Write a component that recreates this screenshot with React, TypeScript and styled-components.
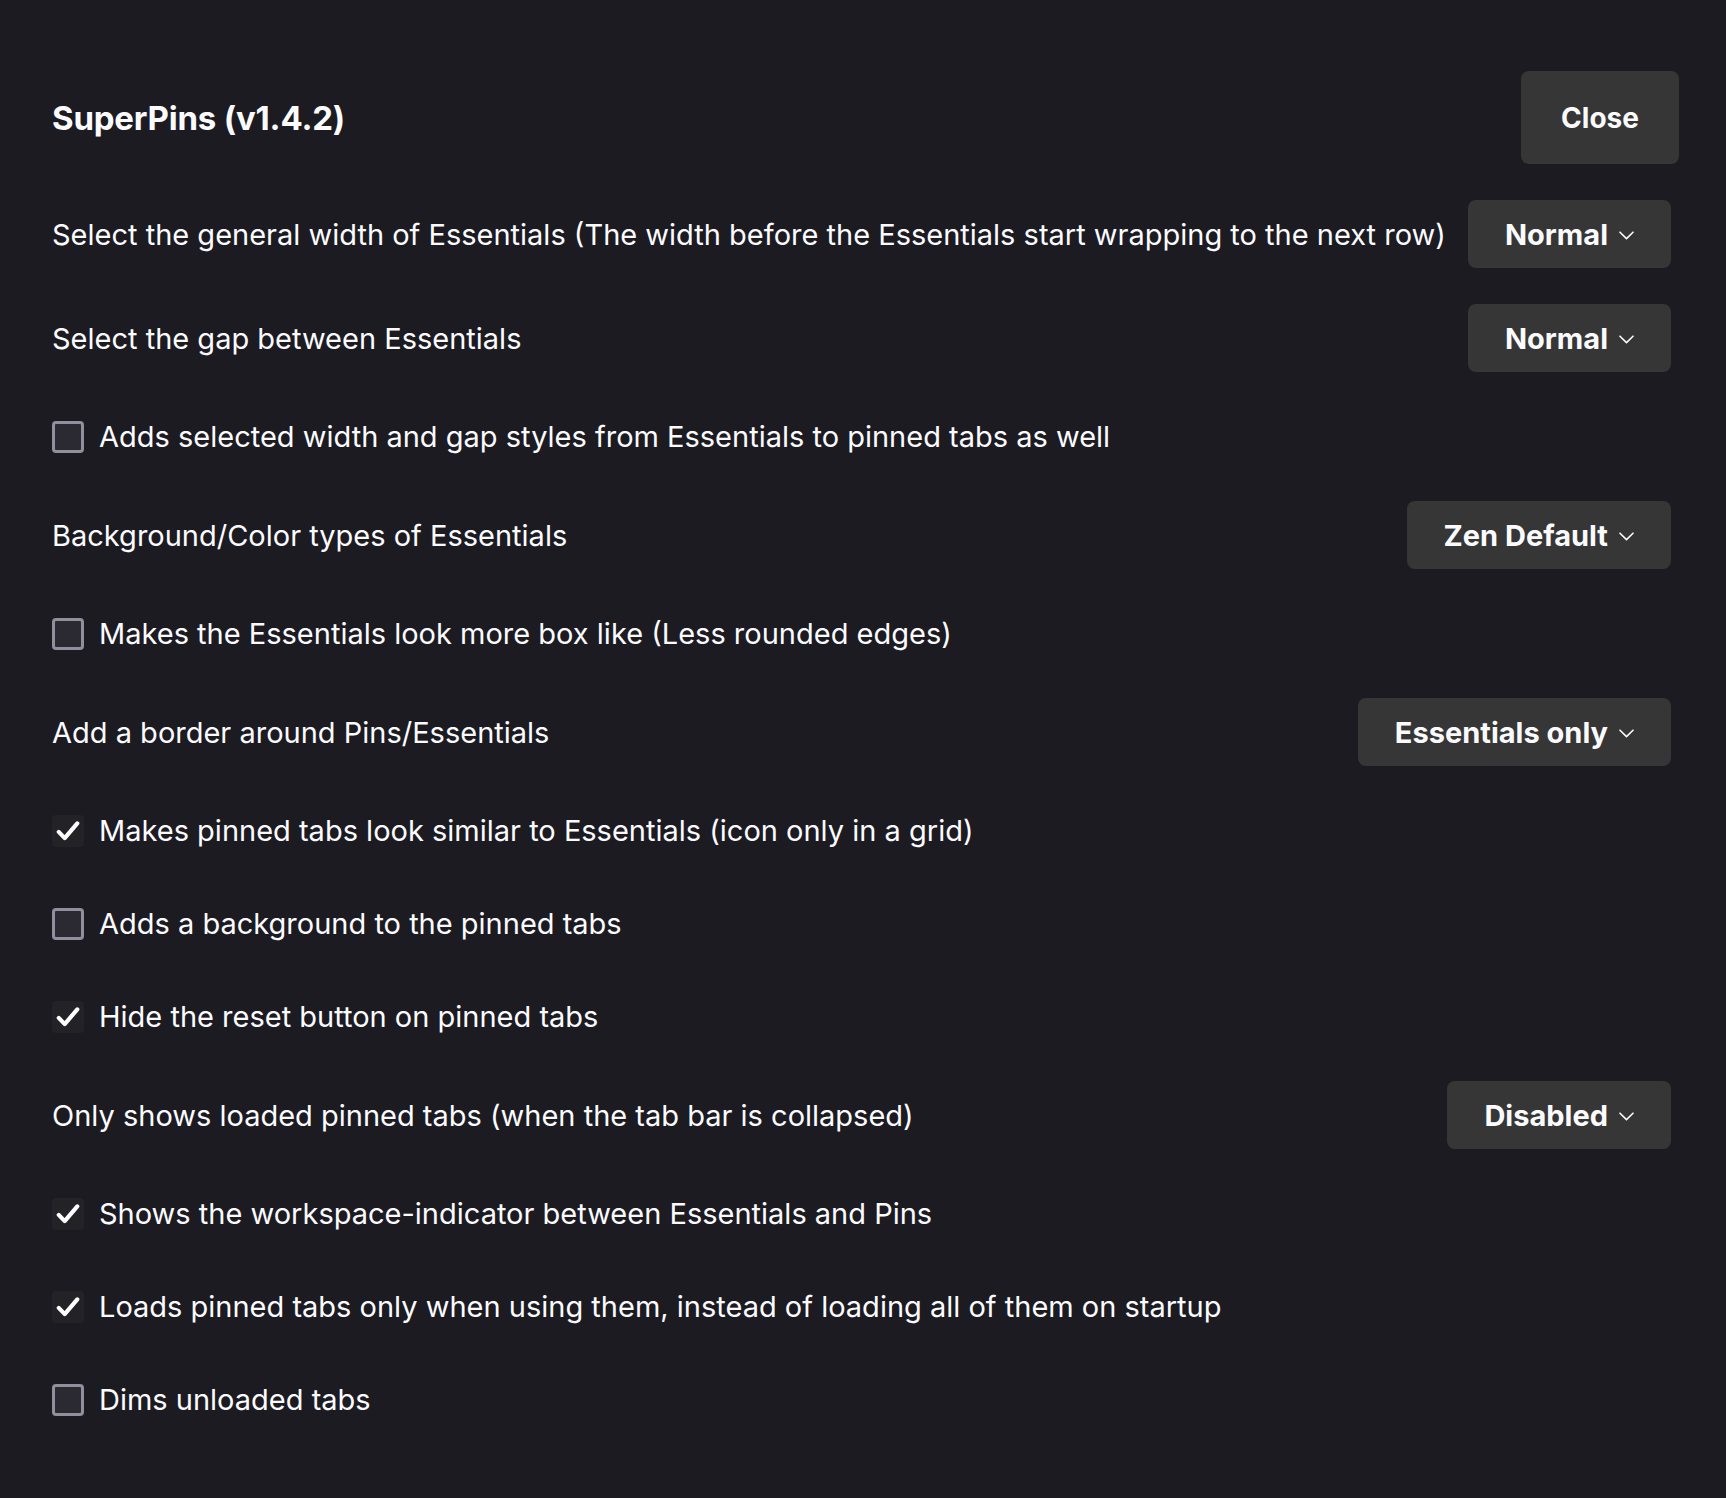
import React from 'react'
import styled, { createGlobalStyle } from 'styled-components'

const GlobalStyle = createGlobalStyle`
    html, body {
        margin: 0;
        padding: 0;
        background: #1c1b22;
    }

    body {
        font-family: Inter, "Noto Sans", "Liberation Sans", sans-serif;
        color: #fbfbfe;
        -webkit-font-smoothing: antialiased;
    }
`

const Page = styled.div`
    min-height: 1498px;
    box-sizing: border-box;
    padding: 71px 47px 60px 52px;
    background: #1c1b22;
`

const Header = styled.header`
    display: flex;
    align-items: center;
    justify-content: space-between;
    margin-bottom: 36px;
`

const Title = styled.h1`
    margin: 0;
    font-size: 33px;
    font-weight: 700;
    letter-spacing: -0.2px;
`

const CloseButton = styled.button`
    width: 158px;
    height: 93px;
    border: none;
    border-radius: 8px;
    background: #363636;
    color: #fbfbfe;
    font-family: inherit;
    font-size: 28px;
    font-weight: 700;
    cursor: pointer;
`

const List = styled.div`
    display: flex;
    flex-direction: column;
    gap: 36px;
`

const SelectRow = styled.div`
    display: flex;
    align-items: center;
    justify-content: space-between;
    height: 68px;
`

const Label = styled.span`
    font-size: 29px;
    font-weight: 400;
    white-space: nowrap;
`

const Dropdown = styled.button`
    display: flex;
    align-items: center;
    gap: 11px;
    height: 68px;
    margin-right: 8px;
    padding: 0 37px 0 37px;
    border: none;
    border-radius: 8px;
    background: #363636;
    color: #fbfbfe;
    font-family: inherit;
    font-size: 29px;
    font-weight: 700;
    cursor: pointer;

    svg {
        width: 15px;
        height: 9px;
        margin-top: 2px;
    }
`

const CheckRow = styled.label`
    display: flex;
    align-items: center;
    gap: 15px;
    height: 57px;
    cursor: pointer;
`

const Box = styled.span<{ checked: boolean }>`
    display: flex;
    align-items: center;
    justify-content: center;
    flex: none;
    width: 32px;
    height: 32px;
    box-sizing: border-box;
    border-radius: 4px;
    background: ${(p) => (p.checked ? '#232327' : '#2b2a33')};
    border: ${(p) => (p.checked ? 'none' : '3px solid #8f8f9d')};

    svg {
        width: 24px;
        height: 22px;
    }
`

type Setting =
    | { kind: 'select'; label: string; value: string }
    | { kind: 'check'; label: string; checked: boolean }

const SETTINGS: Setting[] = [
    { kind: 'select', label: 'Select the general width of Essentials (The width before the Essentials start wrapping to the next row)', value: 'Normal' },
    { kind: 'select', label: 'Select the gap between Essentials', value: 'Normal' },
    { kind: 'check', label: 'Adds selected width and gap styles from Essentials to pinned tabs as well', checked: false },
    { kind: 'select', label: 'Background/Color types of Essentials', value: 'Zen Default' },
    { kind: 'check', label: 'Makes the Essentials look more box like (Less rounded edges)', checked: false },
    { kind: 'select', label: 'Add a border around Pins/Essentials', value: 'Essentials only' },
    { kind: 'check', label: 'Makes pinned tabs look similar to Essentials (icon only in a grid)', checked: true },
    { kind: 'check', label: 'Adds a background to the pinned tabs', checked: false },
    { kind: 'check', label: 'Hide the reset button on pinned tabs', checked: true },
    { kind: 'select', label: 'Only shows loaded pinned tabs (when the tab bar is collapsed)', value: 'Disabled' },
    { kind: 'check', label: 'Shows the workspace-indicator between Essentials and Pins', checked: true },
    { kind: 'check', label: 'Loads pinned tabs only when using them, instead of loading all of them on startup', checked: true },
    { kind: 'check', label: 'Dims unloaded tabs', checked: false },
]

const Chevron = () => (
    <svg viewBox="0 0 15 9" fill="none">
        <path d="M1 1.2 7.5 7.6 14 1.2" stroke="#fbfbfe" strokeWidth="1.6" strokeLinecap="round" strokeLinejoin="round" />
    </svg>
)

const Tick = () => (
    <svg viewBox="0 0 22 20" fill="none">
        <path d="M2.5 10.8 8 16.5 19.5 3" stroke="#ffffff" strokeWidth="3.8" strokeLinecap="round" strokeLinejoin="round" />
    </svg>
)

const App: React.FC = () => {
    return <Page>
        <GlobalStyle />

        {/* ============ dialog header ============= */}
        <Header>
            <Title>SuperPins (v1.4.2)</Title>
            <CloseButton>Close</CloseButton>
        </Header>

        {/* ============ settings ============= */}
        <List>
            {SETTINGS.map((item, index) =>
                item.kind === 'select' ? (
                    <SelectRow key={index}>
                        <Label>{item.label}</Label>
                        <Dropdown>
                            {item.value}
                            <Chevron />
                        </Dropdown>
                    </SelectRow>
                ) : (
                    <CheckRow key={index}>
                        <Box checked={item.checked}>{item.checked && <Tick />}</Box>
                        <Label>{item.label}</Label>
                    </CheckRow>
                )
            )}
        </List>
    </Page>
}

export default App
